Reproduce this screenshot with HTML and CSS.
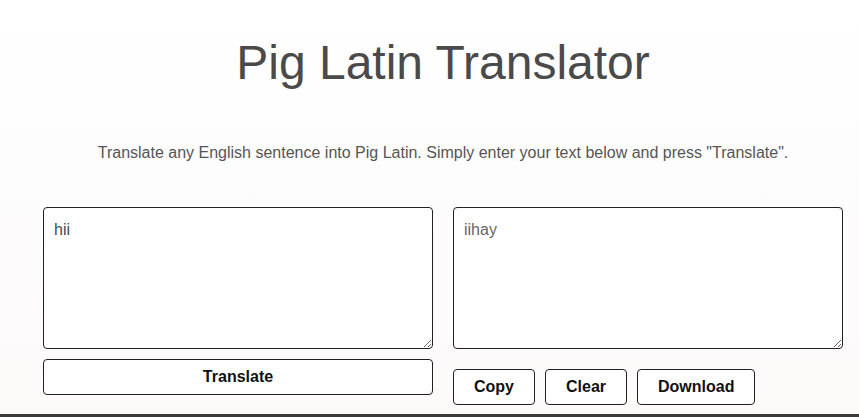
FILE: index.html
```html
<!DOCTYPE html>
<html lang="en">
<head>
<meta charset="utf-8">
<title>Pig Latin Translator</title>
<link rel="stylesheet" href="styles.css">
</head>
<body>
<main class="page">
  <h1 class="title">Pig Latin Translator</h1>
  <p class="intro">Translate any English sentence into Pig Latin. Simply enter your text below and press "Translate".</p>
  <div class="panels">
    <div class="panel">
      <textarea class="box box-input" spellcheck="false">hii</textarea>
      <button class="btn btn-wide" type="button">Translate</button>
    </div>
    <div class="panel">
      <textarea class="box box-output" readonly>iihay</textarea>
      <div class="actions">
        <button class="btn" type="button">Copy</button>
        <button class="btn" type="button">Clear</button>
        <button class="btn" type="button">Download</button>
      </div>
    </div>
  </div>
</main>
<footer class="footer"></footer>
</body>
</html>
```
FILE: styles.css
```css
html, body {
  margin: 0;
  padding: 0;
}
body {
  background: linear-gradient(#ffffff, #fcf9f9);
  font-family: "Liberation Sans", Arial, sans-serif;
  color: #444;
  overflow: hidden;
}
.page {
  box-sizing: border-box;
  padding: 35px 16px 0 43px;
  height: 414px;
}
.title {
  margin: 0;
  font-size: 48px;
  line-height: 56px;
  font-weight: normal;
  color: #4a4a4a;
  text-align: center;
}
.intro {
  margin: 52px 0 0;
  font-size: 16px;
  line-height: 20px;
  color: #555;
  text-align: center;
}
.panels {
  display: grid;
  grid-template-columns: 390px 390px;
  column-gap: 20px;
  margin-top: 44px;
}
.box {
  display: block;
  box-sizing: border-box;
  width: 100%;
  height: 142px;
  margin: 0;
  padding: 10px;
  border: 1px solid #222;
  border-radius: 4px;
  background: #fff;
  font-family: "Liberation Sans", Arial, sans-serif;
  font-size: 16px;
  line-height: 1.5;
  resize: both;
  outline: none;
}
.box-input {
  color: #3f4a5a;
}
.box-output {
  color: #666;
}
.btn {
  box-sizing: border-box;
  height: 36px;
  margin: 0;
  padding: 0 20px;
  border: 1px solid #222;
  border-radius: 4px;
  background: #fff;
  color: #111;
  font-family: "Liberation Sans", Arial, sans-serif;
  font-size: 16px;
  font-weight: bold;
  line-height: 18px;
}
.btn-wide {
  display: block;
  width: 100%;
  margin-top: 10px;
}
.actions {
  display: flex;
  gap: 10px;
  margin-top: 20px;
}
.footer {
  height: 40px;
  background: #3b3b3b;
}
```
